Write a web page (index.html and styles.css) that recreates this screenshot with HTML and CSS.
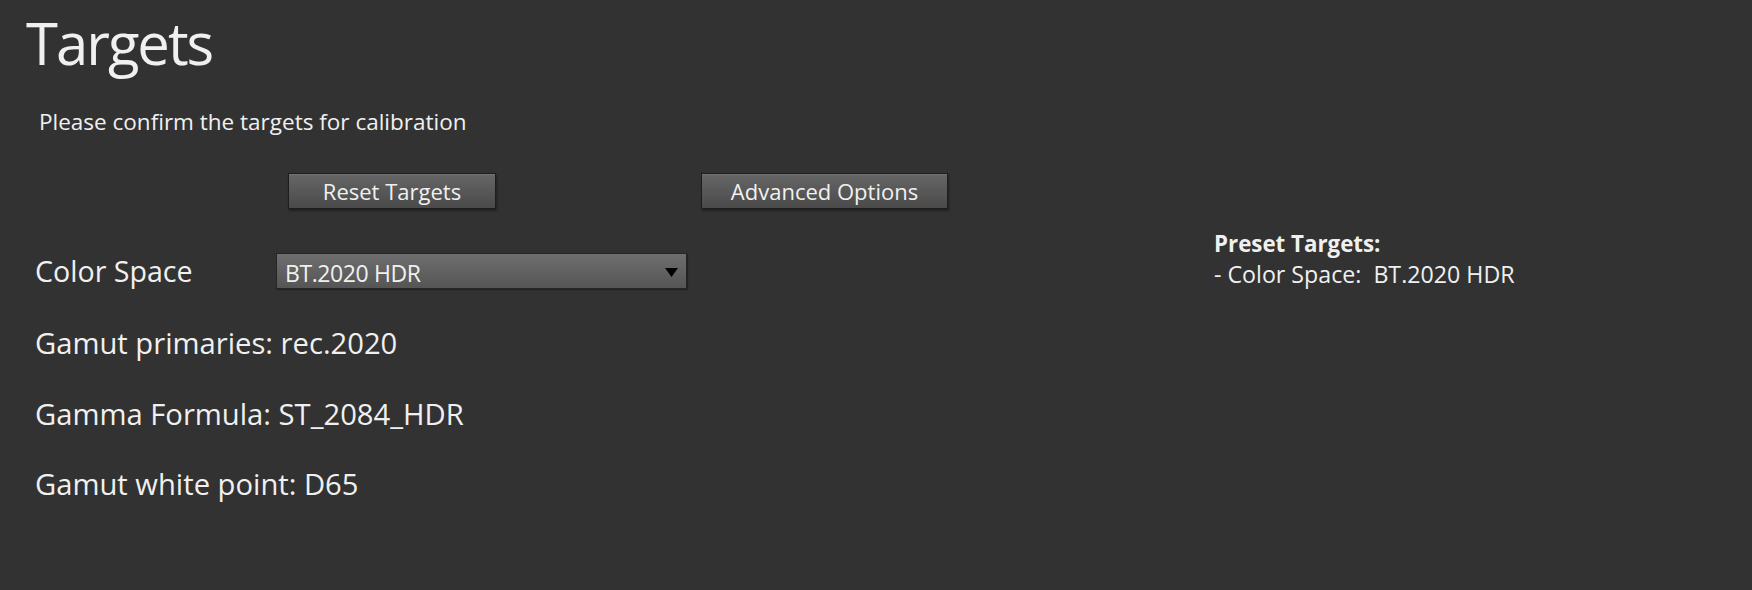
FILE: index.html
```html
<!DOCTYPE html>
<html>
<head>
<title>Targets</title>
<link rel="stylesheet" href="styles.css">
</head>
<body>

<div class="client_area">
	<div class="main">
		<div class="caption">Targets</div>
		<div class="subtitle">Please confirm the targets for calibration</div>
		<div class="btn_row">
			<button class="sysbtn" id="reset_btn">Reset Targets</button>
			<button class="sysbtn" id="advanced_btn">Advanced Options</button>
		</div>
		<div class="field_row">
			<label class="field_label" for="color_space_box">Color Space</label>
			<div class="select_box" id="color_space_box">
				<span class="select_text">BT.2020 HDR</span>
				<svg class="select_arrow" width="13" height="9" viewBox="0 0 13 9"><path d="M0 0 L13 0 L6.5 9 Z" fill="#000"/></svg>
			</div>
		</div>
		<div class="info_list">
			<div class="info_line">Gamut primaries: rec.2020</div>
			<div class="info_line">Gamma Formula: ST_2084_HDR</div>
			<div class="info_line">Gamut white point: D65</div>
		</div>
	</div>
	<div class="preset">
		<div class="preset_title">Preset Targets:</div>
		<div class="preset_line">- Color Space:&nbsp; BT.2020 HDR</div>
	</div>
</div>

</body>
</html>
```

FILE: styles.css
```css
	body
	{
		margin : 0;
		background-color : #323232;
		color : #f0f0f0;
		font-family : "Open Sans", "Noto Sans", sans-serif;
	}
	.client_area
	{
		display : flex;
		padding-left : 26px;
		height : 590px;
		box-sizing : border-box;
	}
	.main
	{
		width : 1188px;
		flex-shrink : 0;
	}
	.caption
	{
		padding-top : 8px;
		font-size : 58px;
		line-height : 70px;
		letter-spacing : -2px;
	}
	.subtitle
	{
		margin-top : 30px;
		padding-left : 13px;
		font-size : 22.5px;
		line-height : 28px;
	}
	.btn_row
	{
		display : flex;
		gap : 205px;
		margin-top : 37px;
		margin-left : 262px;
	}
	.sysbtn
	{
		height : 36px;
		box-sizing : border-box;
		padding : 0;
		border : 1px solid #1e1e1e;
		background : linear-gradient(#666666, #4a4a4a);
		box-shadow : 1px 2px 2px rgba(0,0,0,0.35), inset 0 1px 0 rgba(255,255,255,0.08);
		color : #f0f0f0;
		font-family : inherit;
		font-size : 22px;
		line-height : 34px;
	}
	#reset_btn
	{
		width : 208px;
	}
	#advanced_btn
	{
		width : 247px;
	}
	.field_row
	{
		display : flex;
		margin-top : 44px;
		padding-left : 9px;
	}
	.field_label
	{
		width : 241px;
		font-size : 28.6px;
		line-height : 36px;
	}
	.select_box
	{
		display : flex;
		align-items : center;
		justify-content : space-between;
		width : 411px;
		height : 36px;
		box-sizing : border-box;
		padding : 0 8px 0 8px;
		border : 1px solid #262626;
		background : linear-gradient(#6e6e6e, #555555);
		box-shadow : 1px 1px 1px rgba(0,0,0,0.3);
	}
	.select_text
	{
		padding-top : 5px;
		font-size : 23px;
		line-height : 29px;
		letter-spacing : -0.4px;
	}
	.select_arrow
	{
		margin-top : 2px;
	}
	.info_list
	{
		display : flex;
		flex-direction : column;
		gap : 34.5px;
		margin-top : 36px;
		padding-left : 9px;
	}
	.info_line
	{
		font-size : 29.2px;
		line-height : 36px;
	}
	.preset
	{
		padding-top : 228px;
		line-height : 31px;
	}
	.preset_title
	{
		font-size : 22.3px;
		font-weight : bold;
	}
	.preset_line
	{
		font-size : 23.2px;
	}
```
